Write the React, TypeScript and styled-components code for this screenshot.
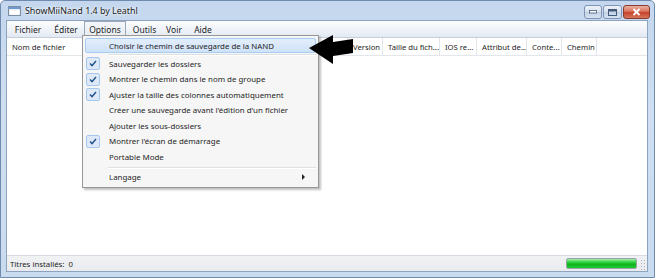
import React from "react";
import styled, { createGlobalStyle } from "styled-components";

const Global = createGlobalStyle`
  html, body { margin: 0; padding: 0; background: #ffffff; }
  body { font-family: "Noto Sans", "Open Sans", sans-serif; }
  * { box-sizing: border-box; }
`;

const FONT = `"Noto Sans", "Open Sans", sans-serif`;

const Window = styled.div`
  position: relative;
  width: 655px;
  height: 278px;
  display: flex;
  flex-direction: column;
  background: linear-gradient(180deg, #c4d7ee 0%, #cfdff1 40%, #c9dbef 100%);
  border: 1px solid #6f8bad;
  border-radius: 5px 5px 0 0;
  overflow: hidden;
  font-family: ${FONT};
  color: #1e1e1e;
`;

const TitleBar = styled.div`
  height: 19px;
  flex: none;
  display: flex;
  align-items: center;
  padding: 0 4px 0 7px;
  gap: 4px;
`;

const TitleText = styled.span`
  font-size: 8.9px;
  color: #1a1a1a;
  flex: 1;
  text-shadow: 0 0 4px #ffffff, 0 0 2px #ffffff;
`;

const Caption = styled.div`
  display: flex;
  gap: 1px;
  align-self: flex-start;
  margin-top: 4px;
`;

const CapButton = styled.div<{ $w: number; $close?: boolean }>`
  width: ${(p) => p.$w}px;
  height: 14px;
  border: 1px solid ${(p) => (p.$close ? "#8a3a2c" : "#7e94b2")};
  border-radius: 3px;
  background: ${(p) =>
    p.$close
      ? "linear-gradient(180deg, #eab0a2 0%, #d9735c 45%, #c4432b 55%, #d8765e 100%)"
      : "linear-gradient(180deg, #eef3f9 0%, #d7e2ef 45%, #c2d2e6 55%, #d6e3f1 100%)"};
  display: flex;
  align-items: center;
  justify-content: center;
`;

const Body = styled.div`
  flex: 1;
  display: flex;
  flex-direction: column;
  margin: 0 6px 5px 5px;
  background: #ffffff;
  border: 1px solid #8ea3bd;
  min-height: 0;
`;

const MenuBar = styled.div`
  height: 16px;
  flex: none;
  display: flex;
  align-items: stretch;
  padding-left: 1px;
  background: linear-gradient(180deg, #fbfcfe 0%, #eef2f8 60%, #e3e9f2 100%);
  font-size: 8.5px;
`;

const MenuItem = styled.div<{ $open?: boolean; $w: number }>`
  width: ${(p) => p.$w}px;
  display: flex;
  align-items: center;
  justify-content: center;
  border: 1px solid ${(p) => (p.$open ? "#9aa8ba" : "transparent")};
  border-bottom: none;
  background: ${(p) => (p.$open ? "linear-gradient(180deg,#f3f6fa,#e6ecf3)" : "transparent")};
`;

const ListView = styled.div`
  flex: 1;
  display: flex;
  flex-direction: column;
  border-top: 1px solid #c5cfdc;
  background: #ffffff;
`;

const Header = styled.div`
  height: 18px;
  flex: none;
  display: flex;
  border-bottom: 1px solid #e3e6ea;
  font-size: 7.7px;
`;

const Col = styled.div<{ $w: number }>`
  width: ${(p) => p.$w}px;
  flex: none;
  display: flex;
  align-items: center;
  padding-left: 5px;
  border-right: 1px solid #e2e5ea;
  white-space: nowrap;
  overflow: hidden;
`;

const Rows = styled.div`
  flex: 1;
`;

const StatusBar = styled.div`
  height: 16px;
  flex: none;
  display: flex;
  align-items: center;
  padding: 0 0 0 3px;
  background: linear-gradient(180deg, #f1f2f4 0%, #e9ebee 100%);
  border-top: 1px solid #d6dbe2;
  font-size: 7.8px;
`;

const StatusText = styled.span`
  flex: 1;
`;

const Progress = styled.div`
  width: 71px;
  height: 11px;
  border: 1px solid #9aa3ab;
  border-radius: 2px;
  background: linear-gradient(180deg, #a6eeaa 0%, #2fd23f 35%, #0fb320 60%, #1ecb2f 100%);
`;

const Grip = styled.div`
  width: 8px;
  height: 12px;
  margin-left: 2px;
  background-image: radial-gradient(circle, #a9b2bd 0.8px, transparent 1px);
  background-size: 3px 3px;
  background-position: 1px 1px;
`;

const Dropdown = styled.div`
  position: absolute;
  left: 81px;
  top: 34px;
  width: 237px;
  padding: 2px 2px 2px 2px;
  background: #f6f6f6;
  border: 1px solid #979797;
  box-shadow: 2px 2px 2px rgba(0, 0, 0, 0.25);
  font-size: 7.9px;
  display: flex;
  flex-direction: column;
`;

const DItem = styled.div<{ $hot?: boolean; $h: number }>`
  height: ${(p) => p.$h}px;
  flex: none;
  display: flex;
  align-items: center;
  border: 1px solid ${(p) => (p.$hot ? "#a8cdf3" : "transparent")};
  border-radius: 2px;
  background: ${(p) =>
    p.$hot ? "linear-gradient(180deg, #e3eefb 0%, #cfe2f8 100%)" : "transparent"};
  padding-right: 6px;
`;

const Gutter = styled.div`
  width: 23px;
  flex: none;
  display: flex;
  align-items: center;
`;

const CheckBox = styled.div`
  width: 14px;
  height: 13px;
  border: 1px solid #a4c7ee;
  border-radius: 2px;
  background: #dde9f8;
  display: flex;
  align-items: center;
  justify-content: center;
`;

const Label = styled.span`
  flex: 1;
  white-space: nowrap;
`;

const Separator = styled.div<{ $h: number }>`
  height: ${(p) => p.$h}px;
  flex: none;
  display: flex;
  align-items: center;
  padding-left: 23px;
  &::after {
    content: "";
    flex: 1;
    height: 1px;
    background: #e0e0e0;
    box-shadow: 0 1px 0 #ffffff;
  }
`;

const SubArrow = styled.span`
  width: 0;
  height: 0;
  border-top: 3px solid transparent;
  border-bottom: 3px solid transparent;
  border-left: 3px solid #222;
  margin-right: 4px;
`;

const Pointer = styled.svg`
  position: absolute;
  left: 305px;
  top: 31px;
`;

const Check = () => (
  <svg width="8" height="7" viewBox="0 0 8 7">
    <path d="M1 3.6 L3 5.6 L7 1" fill="none" stroke="#1d4f8a" strokeWidth="1.4" />
  </svg>
);

const menuItems: { label: string; checked?: boolean; hot?: boolean; sep?: boolean; sub?: boolean; h: number }[] = [
  { label: "Choisir le chemin de sauvegarde de la NAND", hot: true, h: 15 },
  { label: "", sep: true, h: 3 },
  { label: "Sauvegarder les dossiers", checked: true, h: 15.5 },
  { label: "Montrer le chemin dans le nom de groupe", checked: true, h: 15.5 },
  { label: "Ajuster la taille des colonnes automatiquement", checked: true, h: 15.5 },
  { label: "Créer une sauvegarde avant l'édition d'un fichier", h: 15.5 },
  { label: "Ajouter les sous-dossiers", h: 15.5 },
  { label: "Montrer l'écran de démarrage", checked: true, h: 15.5 },
  { label: "Portable Mode", h: 15.5 },
  { label: "", sep: true, h: 5 },
  { label: "Langage", sub: true, h: 15.5 },
];

const columns: { label: string; w: number }[] = [
  { label: "Nom de fichier", w: 118 },
  { label: "", w: 110 },
  { label: "", w: 113 },
  { label: "Version", w: 35 },
  { label: "Taille du fich...", w: 57 },
  { label: "IOS re...", w: 37 },
  { label: "Attribut de...", w: 50 },
  { label: "Conte...", w: 35 },
  { label: "Chemin", w: 35 },
];

export default function App() {
  return (
    <>
      <Global />
      <Window>
        <TitleBar>
          <svg width="13" height="10" viewBox="0 0 13 10">
            <rect x="0.5" y="0.5" width="12" height="9" fill="#e9eef4" stroke="#7f8fa3" />
            <rect x="1" y="1" width="11" height="2" fill="#6d9ad0" />
            <rect x="2" y="4.5" width="9" height="4" fill="#ffffff" />
          </svg>
          <TitleText>ShowMiiNand 1.4 by Leathl</TitleText>
          <Caption>
            <CapButton $w={18}>
              <svg width="8" height="4"><rect x="0.5" y="0.5" width="7" height="2.5" fill="#fff" stroke="#435a78" strokeWidth="0.8" /></svg>
            </CapButton>
            <CapButton $w={19}>
              <svg width="9" height="7"><rect x="0.5" y="0.5" width="8" height="6" fill="none" stroke="#435a78" strokeWidth="1" /><rect x="1" y="1" width="7" height="1.5" fill="#435a78" /></svg>
            </CapButton>
            <CapButton $w={27} $close>
              <svg width="9" height="8" viewBox="0 0 9 8"><path d="M1.5 1 L7.5 7 M7.5 1 L1.5 7" stroke="#ffffff" strokeWidth="1.8" /></svg>
            </CapButton>
          </Caption>
        </TitleBar>
        <Body>
          <MenuBar>
            <MenuItem $w={40}>Fichier</MenuItem>
            <MenuItem $w={36}>Éditer</MenuItem>
            <MenuItem $w={42} $open>Options</MenuItem>
            <MenuItem $w={37}>Outils</MenuItem>
            <MenuItem $w={22}>Voir</MenuItem>
            <MenuItem $w={36}>Aide</MenuItem>
          </MenuBar>
          <ListView>
            <Header>
              {columns.map((c, i) => (
                <Col key={i} $w={c.w}>{c.label}</Col>
              ))}
            </Header>
            <Rows />
          </ListView>
          <StatusBar>
            <StatusText>Titres installés:&nbsp;&nbsp;0</StatusText>
            <Progress />
            <Grip />
          </StatusBar>
        </Body>
        <Dropdown>
          {menuItems.map((m, i) =>
            m.sep ? (
              <Separator key={i} $h={m.h} />
            ) : (
              <DItem key={i} $hot={m.hot} $h={m.h}>
                <Gutter>{m.checked && <CheckBox><Check /></CheckBox>}</Gutter>
                <Label>{m.label}</Label>
                {m.sub && <SubArrow />}
              </DItem>
            )
          )}
        </Dropdown>
        <Pointer width="50" height="36" viewBox="0 0 50 36">
          <polygon points="3,16 27,3 27,10 47,7 47,21 27,24 27,32" fill="#000000" />
        </Pointer>
      </Window>
    </>
  );
}
